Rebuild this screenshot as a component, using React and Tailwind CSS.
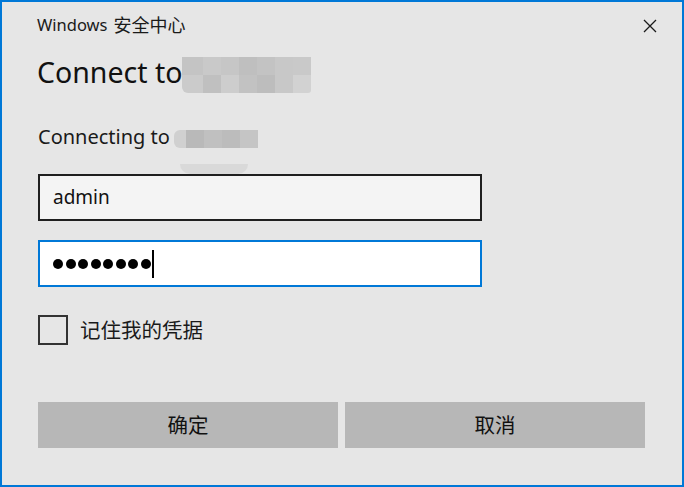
import { useState } from 'react';

const font = { fontFamily: '"Noto Sans", "Noto Sans CJK SC", sans-serif' };

function Pixelated() {
  // mosaic used to hide the host name
  return (
    <div className="relative mt-[5px] flex flex-col">
      <div className="flex">
        <div className="h-[18px] w-[21px] bg-[#c4c4c4]"></div>
        <div className="h-[18px] w-[18px] bg-[#c9c9c9]"></div>
        <div className="h-[18px] w-[18px] bg-[#c6c6c6]"></div>
        <div className="h-[18px] w-[18px] bg-[#bfbfbf]"></div>
        <div className="h-[18px] w-[18px] bg-[#c3c3c3]"></div>
        <div className="h-[18px] w-[18px] bg-[#c8c8c8]"></div>
        <div className="h-[18px] w-[18px] bg-[#c9c9c9]"></div>
      </div>
      <div className="flex">
        <div className="h-[18px] w-[21px] rounded-bl-[6px] bg-[#cbcbcb]"></div>
        <div className="h-[18px] w-[18px] bg-[#c0c0c0]"></div>
        <div className="h-[18px] w-[18px] bg-[#cdcdcd]"></div>
        <div className="h-[18px] w-[18px] bg-[#c2c2c2]"></div>
        <div className="h-[18px] w-[18px] bg-[#bdbdbd]"></div>
        <div className="h-[18px] w-[18px] bg-[#c8c8c8]"></div>
        <div className="h-[18px] w-[18px] rounded-br-[3px] bg-[#d2d2d2]"></div>
      </div>
    </div>
  );
}

export default function App() {
  const [remember, setRemember] = useState(false);
  const dots = [0, 1, 2, 3, 4, 5, 6, 7];

  return (
    <div
      className="flex h-[487px] w-[684px] flex-col border-2 border-[#0078d7] bg-[#e6e6e6] text-black"
      style={font}
    >
      <div className="flex h-[50px] items-start justify-between pl-[35px] pr-[25px] pt-[11px]">
        <div className="flex items-center leading-[24px] text-[#1a1a1a]">
          <span className="text-[16.5px]">Windows</span>
          <span className="ml-[6px] text-[18px]">安全中心</span>
        </div>
        <svg className="mt-[6px] h-[14px] w-[14px]" viewBox="0 0 14 14" fill="none" stroke="#1a1a1a" strokeWidth="1.3">
          <path d="M1 1L13 13M13 1L1 13" />
        </svg>
      </div>

      <div className="flex items-start pl-[35px]">
        <div className="text-[28.5px] leading-[40px] text-[#111]">Connect to</div>
        <Pixelated />
      </div>

      <div className="mt-[30px] flex items-center pl-[36px]">
        <div className="text-[20px] leading-[28px] text-[#1a1a1a]">Connecting to</div>
        <div className="relative ml-[4px] mt-[4px] flex">
          <div className="h-[18px] w-[12px] rounded-l-[6px] bg-[#d0d0d0]"></div>
          <div className="h-[18px] w-[18px] bg-[#b9b9b9]"></div>
          <div className="h-[18px] w-[18px] bg-[#c0c0c0]"></div>
          <div className="h-[18px] w-[18px] bg-[#bcbcbc]"></div>
          <div className="h-[18px] w-[18px] bg-[#c5c5c5]"></div>
          <div className="absolute left-[6px] top-[34px] h-[10px] w-[68px] rounded-b-[10px] bg-[#d9d9d9]"></div>
        </div>
      </div>

      <div className="mt-[23px] flex flex-col gap-[19px] pl-[36px]">
        <div className="flex h-[47px] w-[444px] items-center border-2 border-[#1f1f1f] bg-[#f4f4f4] pl-[13px] text-[19px] text-[#111]">
          admin
        </div>
        <div className="flex h-[47px] w-[444px] items-center border-2 border-[#0078d7] bg-white pl-[13px]">
          <div className="flex gap-[2.5px]">
            {dots.map((d) => (
              <span key={d} className="h-[10px] w-[10px] rounded-full bg-black"></span>
            ))}
          </div>
          <span className="ml-[1px] h-[28px] w-[2px] bg-black"></span>
        </div>
      </div>

      <label className="mt-[28px] flex w-fit cursor-pointer items-center pl-[36px]">
        <input
          type="checkbox"
          className="sr-only"
          checked={remember}
          onChange={() => setRemember(!remember)}
        />
        <span className="h-[30px] w-[30px] border-2 border-[#333] bg-[#e6e6e6]"></span>
        <span className="ml-[12px] text-[20.5px] leading-[28px] text-[#1a1a1a]">记住我的凭据</span>
      </label>

      <div className="mt-[57px] flex gap-[7px] pl-[36px]">
        <button className="h-[46px] w-[300px] bg-[#b7b7b7] text-[20.5px] text-[#111]">确定</button>
        <button className="h-[46px] w-[300px] bg-[#b7b7b7] text-[20.5px] text-[#111]">取消</button>
      </div>
    </div>
  );
}
